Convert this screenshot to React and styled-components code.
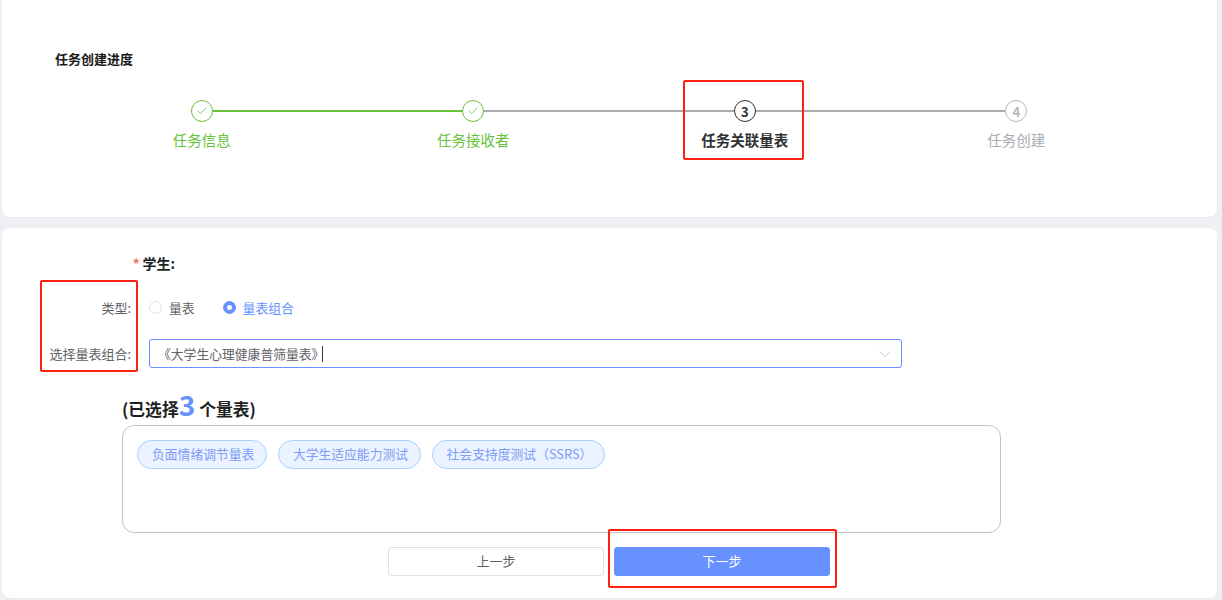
import React from "react";
import styled, { createGlobalStyle } from "styled-components";
import { Check, ChevronDown } from "lucide-react";

const GlobalStyle = createGlobalStyle`
  html, body {
    margin: 0;
    padding: 0;
    height: 600px;
    overflow: hidden;
    background: #eef0f4;
    font-family: "Noto Sans CJK SC", "Noto Sans", sans-serif;
  }
  * { box-sizing: border-box; }
`;

const Page = styled.div`
  position: relative;
  width: 1222px;
  height: 600px;
  padding: 0 5px 2px 2px;
  display: flex;
  flex-direction: column;
  gap: 11px;
`;

const Card = styled.section`
  background: #fff;
  border-radius: 0 0 8px 8px;
  height: 217px;
  padding: 50px 0 0 53px;
  box-shadow: 0 1px 2px rgba(0, 0, 0, 0.04);
`;

const FormCard = styled.section`
  background: #fff;
  border-radius: 8px;
  height: 370px;
  padding: 25px 0 0 0;
  box-shadow: 0 1px 2px rgba(0, 0, 0, 0.04);
`;

const ProgressTitle = styled.h2`
  margin: 0;
  font-size: 13px;
  line-height: 18px;
  font-weight: 700;
  color: #1a1a1a;
`;

const Steps = styled.div`
  display: grid;
  grid-template-columns: repeat(4, 271.5px);
  margin: 32px 0 0 11px;
`;

const Step = styled.div`
  display: flex;
  flex-direction: column;
  align-items: center;
`;

const StepHead = styled.div`
  width: 100%;
  height: 22px;
  display: flex;
  align-items: center;
`;

const Line = styled.div`
  flex: 1;
  height: 2px;
  background: ${(p) => (p.$blank ? "transparent" : p.$done ? "#67c23a" : "#a8abb2")};
`;

const Circle = styled.div`
  width: 22px;
  height: 22px;
  flex: none;
  border-radius: 50%;
  border: 1px solid ${(p) => p.$color};
  color: ${(p) => p.$color};
  display: flex;
  align-items: center;
  justify-content: center;
  font-size: 13px;
  font-weight: 700;
  line-height: 1;
`;

const StepLabel = styled.div`
  margin-top: 8px;
  font-size: 14.5px;
  line-height: 20px;
  font-weight: ${(p) => (p.$active ? 700 : 400)};
  color: ${(p) => p.$color};
`;

const Row = styled.div`
  display: flex;
  align-items: center;
  height: ${(p) => p.$height}px;
  margin-top: ${(p) => p.$top || 0}px;
`;

const RowLabel = styled.label`
  width: 129px;
  flex: none;
  text-align: right;
  font-size: 13px;
  color: #606266;
`;

const GroupHeading = styled.div`
  width: 173px;
  flex: none;
  text-align: right;
  font-size: 14px;
  line-height: 20px;
  font-weight: 700;
  color: #1f1f1f;
`;

const Star = styled.span`
  color: #f56c6c;
  font-size: 18px;
  line-height: 0;
  font-weight: 400;
  margin-right: 2px;
  vertical-align: -3px;
`;

const Radios = styled.div`
  margin-left: 18px;
  display: flex;
  gap: 28px;
`;

const Radio = styled.div`
  display: flex;
  align-items: center;
  gap: 7px;
  font-size: 12.8px;
  color: ${(p) => (p.$on ? "#6691ff" : "#606266")};
`;

const RadioDot = styled.span`
  width: 13px;
  height: 13px;
  border-radius: 50%;
  background: ${(p) => (p.$on ? "#6691ff" : "#fff")};
  border: 1px solid ${(p) => (p.$on ? "#6691ff" : "#dcdfe6")};
  display: flex;
  align-items: center;
  justify-content: center;
  &::after {
    content: "";
    width: 5px;
    height: 5px;
    border-radius: 50%;
    background: ${(p) => (p.$on ? "#fff" : "transparent")};
  }
`;

const Select = styled.div`
  margin-left: 18px;
  width: 753px;
  height: 29px;
  border: 1px solid #6691ff;
  border-radius: 3px;
  padding: 0 6px 0 8px;
  display: flex;
  align-items: center;
  justify-content: space-between;
  font-size: 12.8px;
  color: #606266;
`;

const SelectValue = styled.span`
  display: flex;
  align-items: center;
`;

const Caret = styled.span`
  width: 1px;
  height: 16px;
  margin-left: -2px;
  background: #333;
`;

const SelectedBlock = styled.div`
  margin: 22px 0 0 120px;
  width: 879px;
`;

const SelectedTitle = styled.div`
  height: 35px;
  display: flex;
  align-items: baseline;
  font-size: 16.8px;
  line-height: 29px;
  font-weight: 700;
  color: #1f1f1f;
`;

const Count = styled.span`
  font-size: 28px;
  line-height: 29px;
  color: #6691ff;
  margin-right: 4px;
`;

const TagBox = styled.div`
  height: 108px;
  border: 1px solid #c4c4c4;
  border-radius: 12px;
  padding: 14px;
  display: flex;
  align-items: flex-start;
  gap: 10.5px;
`;

const Tag = styled.span`
  height: 29px;
  padding: 0 12px 2px 14px;
  display: flex;
  align-items: center;
  border: 1px solid #a6d0ff;
  border-radius: 15px;
  background: #eaf3ff;
  color: #7e9cf5;
  font-size: 12.8px;
  white-space: nowrap;
`;

const Actions = styled.div`
  margin: 14px 0 0 386px;
  display: flex;
  gap: 10px;
`;

const Button = styled.button`
  width: 216px;
  height: 29px;
  border-radius: 3px;
  border: 1px solid ${(p) => (p.$primary ? "#6691ff" : "#dcdfe6")};
  background: ${(p) => (p.$primary ? "#6691ff" : "#fff")};
  color: ${(p) => (p.$primary ? "#fff" : "#606266")};
  font-family: inherit;
  font-size: 13px;
  padding: 0 0 2px;
`;

const Highlight = styled.div`
  position: absolute;
  left: ${(p) => p.$x}px;
  top: ${(p) => p.$y}px;
  width: ${(p) => p.$w}px;
  height: ${(p) => p.$h}px;
  border: 2px solid #ff1f10;
  border-radius: 2px;
  pointer-events: none;
`;

const steps = [
  { label: "任务信息", state: "done" },
  { label: "任务接收者", state: "done" },
  { label: "任务关联量表", state: "active" },
  { label: "任务创建", state: "todo" },
];

const stepColor = { done: "#67c23a", active: "#303133", todo: "#a8abb2" };

const tags = ["负面情绪调节量表", "大学生适应能力测试", "社会支持度测试（SSRS）"];

export default function App() {
  return (
    <>
      <GlobalStyle />
      <Page>
        <Card>
          <ProgressTitle>任务创建进度</ProgressTitle>
          <Steps>
            {steps.map((s, i) => (
              <Step key={s.label}>
                <StepHead>
                  <Line $blank={i === 0} $done={s.state === "done"} />
                  <Circle $color={s.state === "todo" ? "#b4b7bd" : stepColor[s.state]}>
                    {s.state === "done" ? <Check size={12} strokeWidth={1.6} /> : i + 1}
                  </Circle>
                  <Line $blank={i === 3} $done={i === 0} />
                </StepHead>
                <StepLabel $active={s.state === "active"} $color={stepColor[s.state]}>
                  {s.label}
                </StepLabel>
              </Step>
            ))}
          </Steps>
        </Card>
        <FormCard>
          <Row $height={20}>
            <GroupHeading>
              <Star>*</Star>学生:
            </GroupHeading>
          </Row>
          <Row $height={20} $top={24}>
            <RowLabel>类型:</RowLabel>
            <Radios>
              <Radio>
                <RadioDot />
                量表
              </Radio>
              <Radio $on>
                <RadioDot $on />
                量表组合
              </Radio>
            </Radios>
          </Row>
          <Row $height={29} $top={22}>
            <RowLabel>选择量表组合:</RowLabel>
            <Select>
              <SelectValue>
                《大学生心理健康普筛量表》
                <Caret />
              </SelectValue>
              <ChevronDown size={20} strokeWidth={0.9} color="#b4b7bd" />
            </Select>
          </Row>
          <SelectedBlock>
            <SelectedTitle>
              (已选择<Count>3</Count>个量表)
            </SelectedTitle>
            <TagBox>
              {tags.map((t) => (
                <Tag key={t}>{t}</Tag>
              ))}
            </TagBox>
          </SelectedBlock>
          <Actions>
            <Button>上一步</Button>
            <Button $primary>下一步</Button>
          </Actions>
        </FormCard>
        <Highlight $x={683} $y={80} $w={121} $h={80} />
        <Highlight $x={40} $y={280} $w={98} $h={92} />
        <Highlight $x={608} $y={529} $w={229} $h={59} />
      </Page>
    </>
  );
}
